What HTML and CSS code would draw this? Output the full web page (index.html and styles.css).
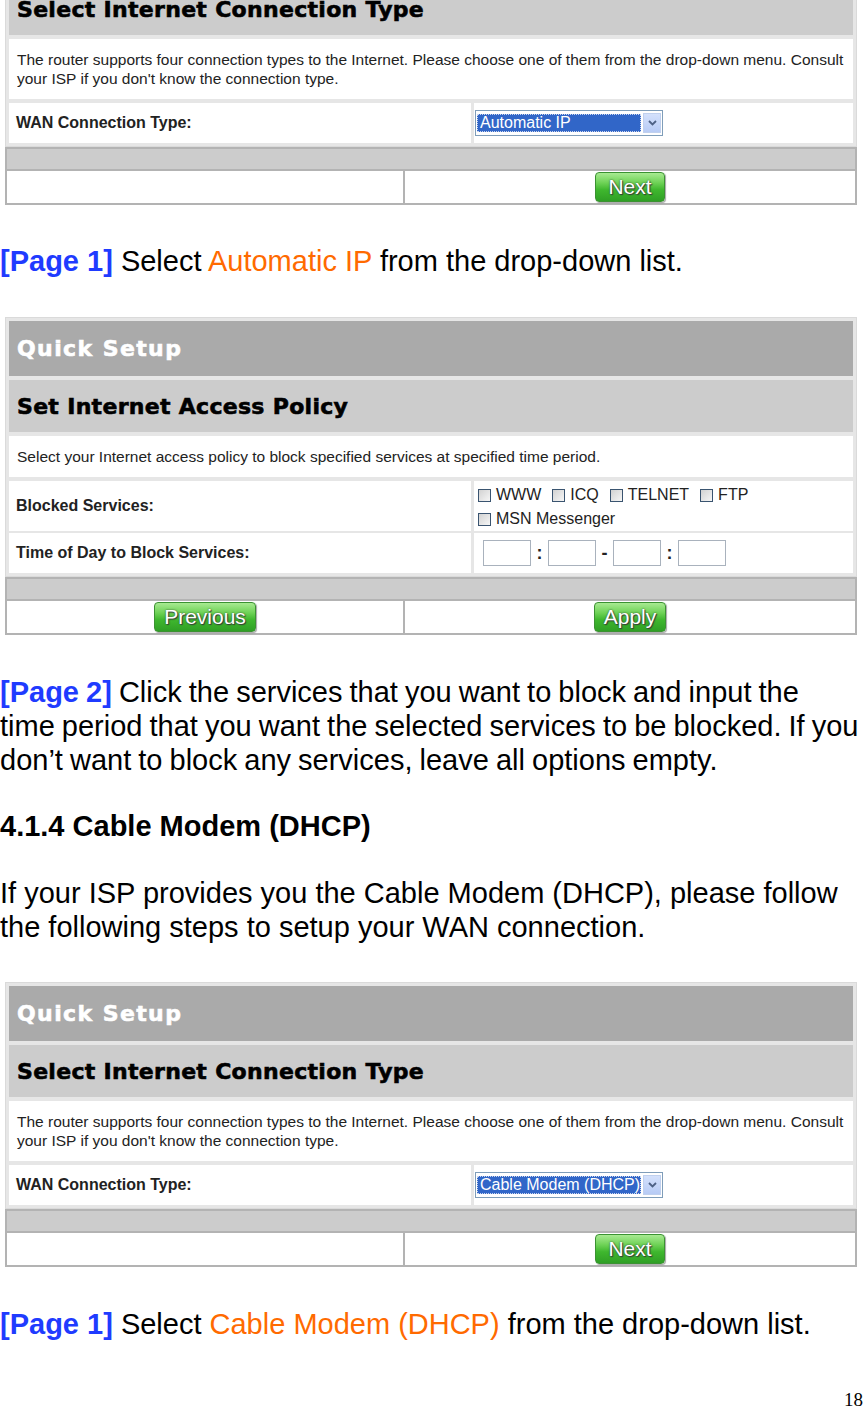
FILE: index.html
```html
<!DOCTYPE html>
<html>
<head>
<meta charset="utf-8">
<title>Quick Setup</title>
<link rel="stylesheet" href="styles.css">
</head>
<body>

<div class="clip">
  <div class="panel shifted">
    <div class="box">
      <div class="hd1">Quick Setup</div>
      <div class="hd2">Select Internet Connection Type</div>
      <div class="desc">The router supports four connection types to the Internet. Please choose one of them from the drop-down menu. Consult your ISP if you don't know the connection type.</div>
      <div class="row">
        <div class="lbl">WAN Connection Type:</div>
        <div class="ctl"><div class="select"><span class="sel-val">Automatic IP</span><span class="sel-btn"><svg width="9" height="6" viewBox="0 0 9 6"><path d="M1 1 L4.5 4.5 L8 1" fill="none" stroke="#4d6185" stroke-width="1.8"/></svg></span></div></div>
      </div>
    </div>
    <div class="foot">
      <div class="bar"></div>
      <div class="btns">
        <div class="cell"></div>
        <div class="cell"><span class="btn">Next</span></div>
      </div>
    </div>
  </div>
</div>

<p class="doc gap-a"><b class="pg">[Page 1]</b> Select <span class="hl">Automatic IP</span> from the drop-down list.</p>

<div class="panel gap-b">
  <div class="box">
    <div class="hd1">Quick Setup</div>
    <div class="hd2">Set Internet Access Policy</div>
    <div class="desc">Select your Internet access policy to block specified services at specified time period.</div>
    <div class="row tall">
      <div class="lbl">Blocked Services:</div>
      <div class="ctl checks">
        <div class="chk-line">
          <span class="chk"><span class="cb"></span>WWW</span>
          <span class="chk"><span class="cb"></span>ICQ</span>
          <span class="chk"><span class="cb"></span>TELNET</span>
          <span class="chk"><span class="cb"></span>FTP</span>
        </div>
        <div class="chk-line">
          <span class="chk"><span class="cb"></span>MSN Messenger</span>
        </div>
      </div>
    </div>
    <div class="row">
      <div class="lbl">Time of Day to Block Services:</div>
      <div class="ctl times">
        <span class="tin"></span><span class="sep">:</span><span class="tin"></span><span class="sep">-</span><span class="tin"></span><span class="sep">:</span><span class="tin"></span>
      </div>
    </div>
  </div>
  <div class="foot">
    <div class="bar"></div>
    <div class="btns">
      <div class="cell"><span class="btn wide">Previous</span></div>
      <div class="cell"><span class="btn">Apply</span></div>
    </div>
  </div>
</div>

<p class="doc gap-c tight"><b class="pg">[Page 2]</b> Click the services that you want to block and input the<br>time period that you want the selected services to be blocked. If you don’t want to block any services, leave all options empty.</p>

<h3 class="sec">4.1.4 Cable Modem (DHCP)</h3>

<p class="doc gap-d">If your ISP provides you the Cable Modem (DHCP), please follow the following steps to setup your WAN connection.</p>

<div class="panel gap-e">
  <div class="box">
    <div class="hd1">Quick Setup</div>
    <div class="hd2">Select Internet Connection Type</div>
    <div class="desc">The router supports four connection types to the Internet. Please choose one of them from the drop-down menu. Consult your ISP if you don't know the connection type.</div>
    <div class="row">
      <div class="lbl">WAN Connection Type:</div>
      <div class="ctl"><div class="select"><span class="sel-val">Cable Modem (DHCP)</span><span class="sel-btn"><svg width="9" height="6" viewBox="0 0 9 6"><path d="M1 1 L4.5 4.5 L8 1" fill="none" stroke="#4d6185" stroke-width="1.8"/></svg></span></div></div>
    </div>
  </div>
  <div class="foot">
    <div class="bar"></div>
    <div class="btns">
      <div class="cell"></div>
      <div class="cell"><span class="btn">Next</span></div>
    </div>
  </div>
</div>

<p class="doc gap-f"><b class="pg">[Page 1]</b> Select <span class="hl">Cable Modem (DHCP)</span> from the drop-down list.</p>

<div class="pgnum">18</div>

</body>
</html>
```

FILE: styles.css
```css
html, body {
  margin: 0;
  padding: 0;
  background: #ffffff;
}
body {
  font-family: "Liberation Sans", Arial, sans-serif;
  color: #000;
}

/* clipped first panel (continues from previous page) */
.clip {
  overflow: hidden;
  height: 206px;
}
.shifted {
  margin-top: -80px;
}

.panel {
  width: 852px;
  margin-left: 5px;
}

.box {
  display: flex;
  flex-direction: column;
  gap: 4px;
  background: #e6e6e6;
  border: 1px solid #dadada;
  padding: 3px;
}

.hd1, .hd2 {
  font-family: "DejaVu Sans", Verdana, sans-serif;
  font-weight: bold;
  font-size: 22px;
  display: flex;
  align-items: center;
  padding-left: 8px;
  -webkit-text-stroke: 0.6px currentColor;
}
.hd1 {
  background: #aaaaaa;
  color: #ffffff;
  height: 55px;
  letter-spacing: 1.4px;
}
.hd2 {
  background: #cccccc;
  color: #000000;
  height: 52px;
  letter-spacing: 0.3px;
}

.desc {
  background: #ffffff;
  font-size: 15.5px;
  line-height: 19px;
  padding: 11px 8px 11px 8px;
  color: #222;
}

.row {
  display: grid;
  grid-template-columns: 462px 1fr;
  column-gap: 3px;
  height: 40px;
}
.row.tall {
  height: 48px;
}
.lbl {
  background: #ffffff;
  font-weight: bold;
  font-size: 16px;
  color: #222;
  display: flex;
  align-items: center;
  padding-left: 7px;
}
.ctl {
  background: #ffffff;
  display: flex;
  align-items: center;
  padding-left: 1px;
}

/* select */
.select {
  width: 184px;
  height: 22px;
  border: 1px solid #7f9db9;
  display: flex;
  align-items: center;
  padding: 1px;
  gap: 2px;
  background: #fff;
}
.sel-val {
  flex: 1;
  height: 18px;
  background: #3166c8;
  color: #ffffff;
  font-size: 16px;
  line-height: 18px;
  padding-left: 3px;
  outline: 1px dotted #c8d4ee;
  outline-offset: -1px;
  white-space: nowrap;
  overflow: hidden;
}
.sel-btn {
  width: 18px;
  height: 20px;
  background: linear-gradient(#d4e1fc, #b7cbf5);
  border: 1px solid #c0d0ee;
  box-sizing: border-box;
  display: flex;
  align-items: center;
  justify-content: center;
}

/* checkboxes */
.checks {
  flex-direction: column;
  align-items: flex-start;
  justify-content: flex-start;
  padding-left: 4px;
  padding-top: 2px;
  box-sizing: border-box;
}
.chk-line {
  display: flex;
  gap: 11px;
  height: 24px;
  flex: none;
  align-items: center;
}
.chk {
  display: inline-flex;
  align-items: center;
  gap: 5px;
  font-size: 16px;
  color: #222;
}
.cb {
  width: 11px;
  height: 11px;
  border: 1px solid #3a5470;
  background: linear-gradient(135deg, #d2d2d2, #f6f6f6);
  display: inline-block;
}

/* time inputs */
.times {
  padding-left: 9px;
}
.tin {
  width: 46px;
  height: 24px;
  border: 1px solid #a9b2bd;
  background: #fff;
  display: inline-block;
}
.sep {
  width: 17px;
  text-align: center;
  font-weight: bold;
  font-size: 18px;
  color: #222;
}

/* footer */
.foot {
  border: 2px solid #b3b3b3;
  background: #b3b3b3;
  display: flex;
  flex-direction: column;
  gap: 2px;
}
.bar {
  height: 20px;
  background: #cccccc;
}
.btns {
  display: grid;
  grid-template-columns: 396px 1fr;
  column-gap: 2px;
  height: 32px;
}
.cell {
  background: #ffffff;
  display: flex;
  align-items: center;
  justify-content: center;
}
.btn {
  display: inline-flex;
  align-items: center;
  justify-content: center;
  min-width: 70px;
  height: 30px;
  box-sizing: border-box;
  padding: 0 9px;
  border: 1px solid #3b9232;
  border-radius: 4px;
  background: linear-gradient(#a8ea92 0%, #6ed256 35%, #3fb72e 60%, #2f9f25 100%);
  box-shadow: 1px 1px 1px rgba(0,0,0,0.35);
  color: #ffffff;
  font-size: 21px;
  text-shadow: 0 0 2px #2d4a2d, 1px 1px 1px #3a3a3a;
}

/* document text */
.doc {
  font-size: 29px;
  line-height: 34px;
  margin: 0;
}
.doc.tight {
  word-spacing: -1px;
}
.pg {
  color: #1f3bff;
}
.hl {
  color: #ff6a00;
}
.gap-a { margin-top: 38px; }
.gap-b { margin-top: 39px; }
.gap-c { margin-top: 40px; }
.sec {
  font-size: 29px;
  line-height: 34px;
  font-weight: bold;
  margin: 32px 0 0 0;
}
.gap-d { margin-top: 33px; }
.gap-e { margin-top: 38px; }
.gap-f { margin-top: 40px; }

.pgnum {
  font-family: "Liberation Serif", "Times New Roman", serif;
  font-size: 19px;
  line-height: 22px;
  text-align: right;
  padding-right: 1px;
  margin-top: 48px;
}
```
